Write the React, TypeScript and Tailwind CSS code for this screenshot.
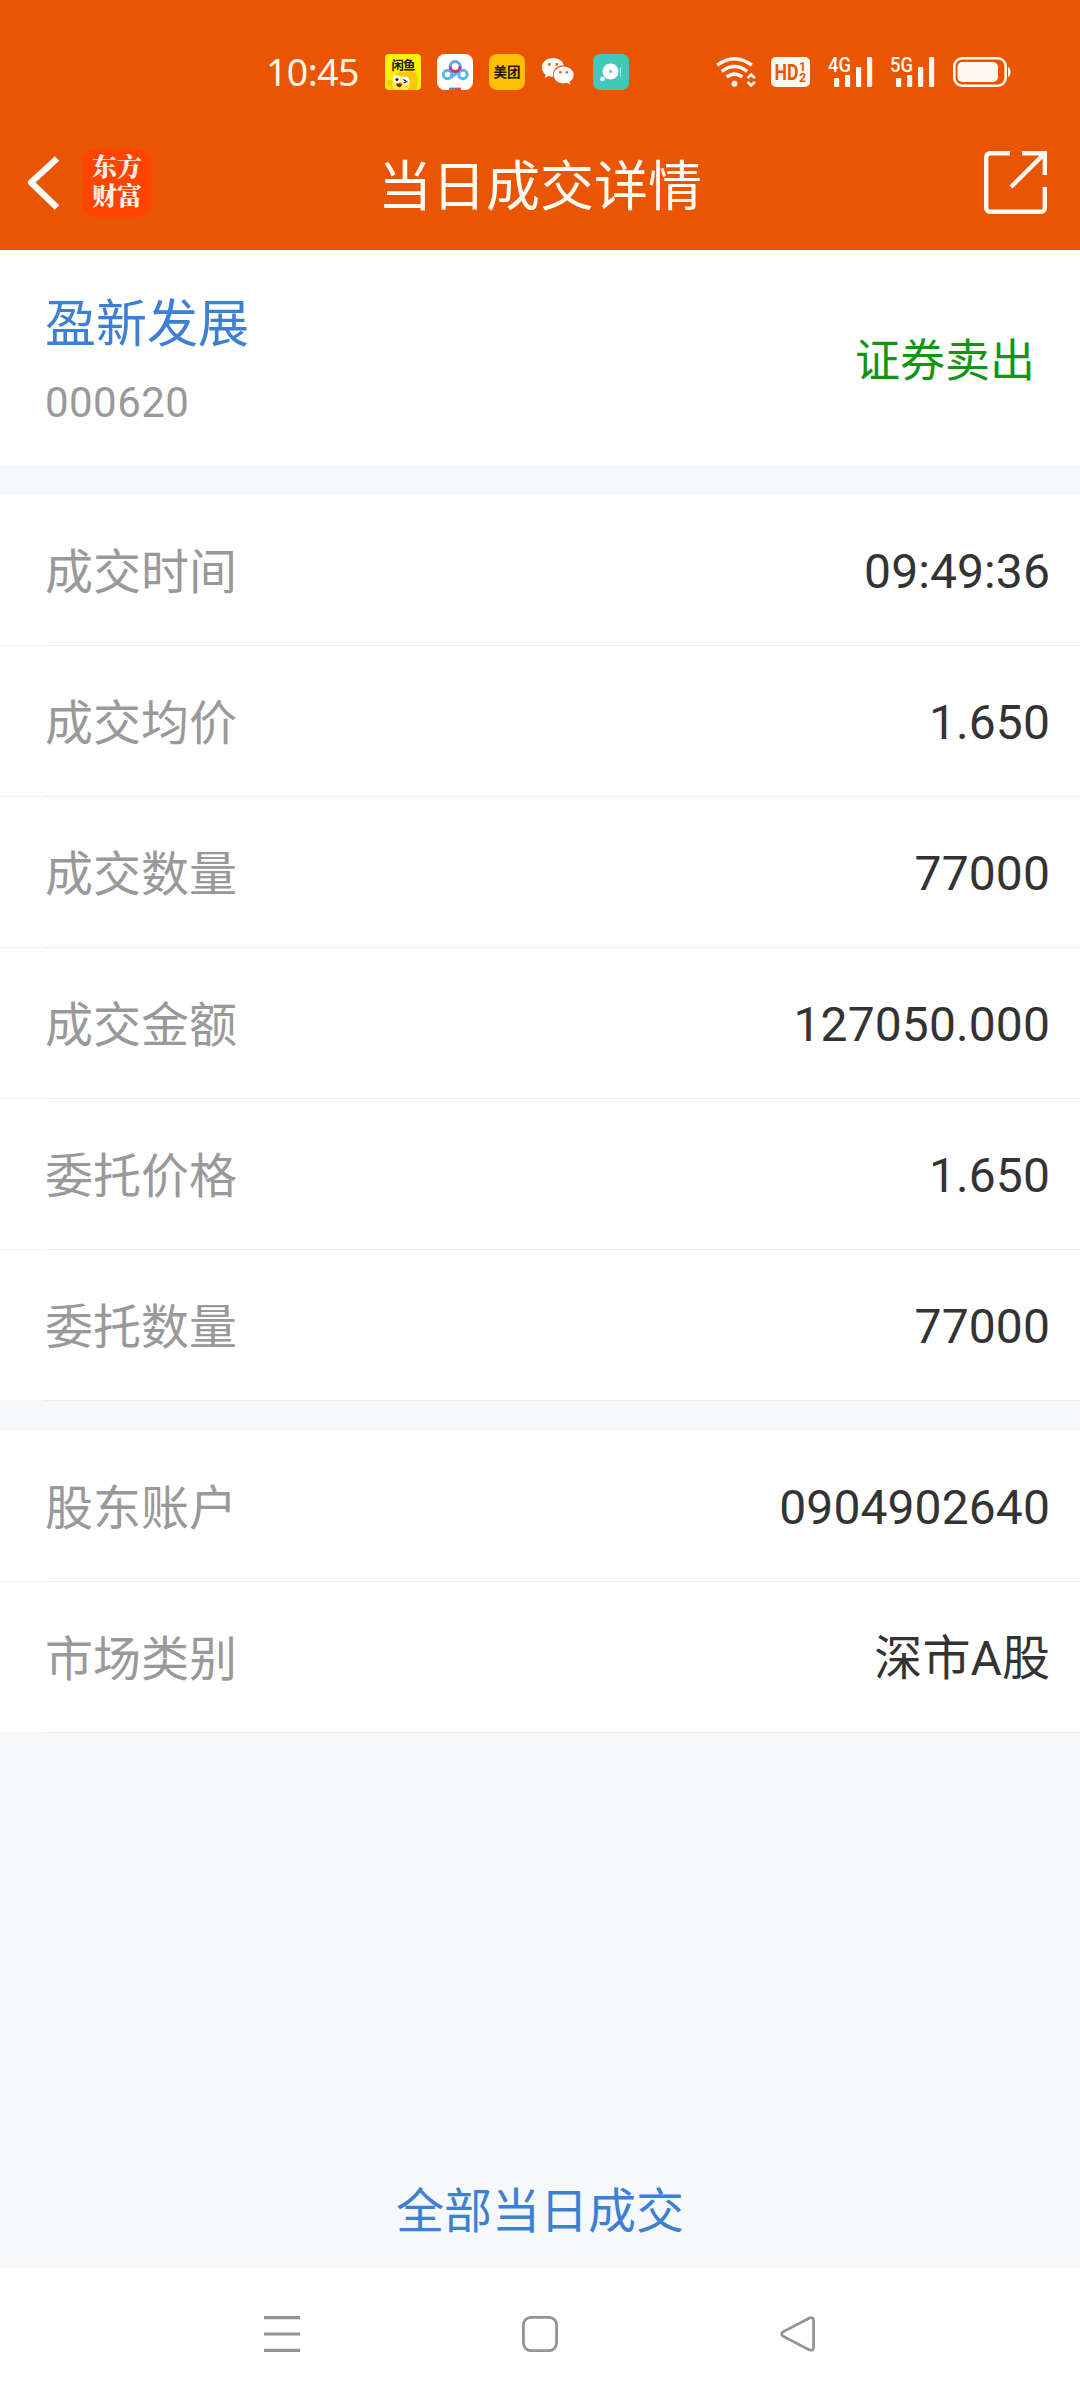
type Row = { label: string; value: string };

const tradeRows: Row[] = [
  { label: "成交时间", value: "09:49:36" },
  { label: "成交均价", value: "1.650" },
  { label: "成交数量", value: "77000" },
  { label: "成交金额", value: "127050.000" },
  { label: "委托价格", value: "1.650" },
  { label: "委托数量", value: "77000" },
];

const accountRows: Row[] = [
  { label: "股东账户", value: "0904902640" },
  { label: "市场类别", value: "深市A股" },
];

function XianyuIcon() {
  return (
    <svg width="36" height="36" viewBox="0 0 36 36">
      <defs>
        <clipPath id="xianyu">
          <rect width="36" height="36" rx="4" />
        </clipPath>
      </defs>
      <g clipPath="url(#xianyu)">
        <rect width="36" height="36" fill="#fcf303" />
        <path d="M3 31c-1-3 0-6 2-5l2 1c1-6 6-9 12-9 3-3 10-3 13 3 2 5 1 11-1 15H7z" fill="#fbc60c" />
        <ellipse cx="16" cy="30" rx="9" ry="8" fill="#fdee3a" />
        <circle cx="11.500" cy="25" r="3.800" fill="#fff" />
        <circle cx="20" cy="26.500" r="4.300" fill="#fff" />
        <circle cx="12" cy="25.500" r="1.600" fill="#222" />
        <path d="M18 25.500l3 1.500M18.500 29l4-1.800" stroke="#222" strokeWidth="1.200" />
        <path d="M11 29.500h6c0 5-5 5-6 0z" fill="#8a1a10" />
        <text x="6.500" y="15.500" fontSize="12.500" fontWeight="700" textLength="24" fill="#1c1c00" fontFamily="Noto Sans CJK SC, sans-serif">
          闲鱼
        </text>
      </g>
    </svg>
  );
}

function NetdiskIcon() {
  return (
    <svg width="36" height="36" viewBox="0 0 36 36" fill="none">
      <rect width="36" height="36" rx="8" fill="#fff" />
      <circle cx="10.500" cy="20.500" r="4.200" stroke="#58b4ea" strokeWidth="3" />
      <circle cx="26" cy="20.500" r="4.200" stroke="#58b4ea" strokeWidth="3" />
      <path d="M14 23.500L22 17" stroke="#58b4ea" strokeWidth="3" />
      <circle cx="18.200" cy="12.500" r="5" stroke="#5fa6e6" strokeWidth="3" />
      <path d="M13.200 12.500a5 5 0 0 0 10 0" stroke="#d4347c" strokeWidth="3" />
      <path d="M12 34.800h6" stroke="#3a8ee6" strokeWidth="2.400" />
      <path d="M18 34.800h6" stroke="#e8405a" strokeWidth="2.400" />
    </svg>
  );
}

function MeituanIcon() {
  return (
    <svg width="36" height="36" viewBox="0 0 36 36">
      <rect width="36" height="36" rx="8" fill="#fdc006" />
      <text x="4.500" y="23" fontSize="13.500" fontWeight="700" textLength="27" fill="#1f1a00" fontFamily="Noto Sans CJK SC, sans-serif">
        美团
      </text>
    </svg>
  );
}

function WechatIcon() {
  return (
    <svg width="36" height="30" viewBox="0 0 36 30" fill="#fff">
      <path d="M12 1C5.500 1 .8 5.200.8 10.500c0 3 1.600 5.400 4 7.100L3.700 21l3.900-2c1.300.4 2.900.7 4.800.7-1.800-5.900 3-11.400 10.400-11.400C21.800 3.900 17.400 1 12 1z" />
      <path d="M22.600 9.600c-5.500 0-9.800 3.700-9.800 8.300 0 4.700 4.300 8.300 9.800 8.300 1.200 0 2.400-.2 3.400-.5l3.300 1.900-.9-2.900c2.500-1.500 4.300-3.900 4.300-6.800 0-4.600-4.600-8.300-10.100-8.300z" />
      <g fill="#ea5504">
        <circle cx="8.300" cy="7.400" r="1.400" />
        <circle cx="15.800" cy="7.400" r="1.400" />
        <circle cx="19.300" cy="15.300" r="1.200" />
        <circle cx="25.900" cy="15.300" r="1.200" />
      </g>
    </svg>
  );
}

function ChatIcon() {
  return (
    <svg width="36" height="36" viewBox="0 0 36 36">
      <rect width="36" height="36" rx="7" fill="#40c9b6" />
      <circle cx="17.500" cy="17.500" r="8" fill="#fff" />
      <circle cx="17.500" cy="17.500" r="1.400" fill="#40c9b6" />
      <circle cx="9.500" cy="25" r="2.300" fill="#fff" />
      <path d="M27.500 14v5.500M27.500 20.800v1.500" stroke="#d5f5ee" strokeWidth="1.100" />
    </svg>
  );
}

function WifiIcon() {
  return (
    <svg width="40" height="30" viewBox="0 0 40 30" fill="none" stroke="#fffaf0" strokeWidth="3.500">
      <path d="M1.200 8.200Q18.500-4.600 35.800 8.200" />
      <path d="M5.800 14.300Q18.500 4.700 31.200 14.300" />
      <path d="M10.700 20Q18.500 14.300 26.300 20" />
      <circle cx="18.500" cy="26.800" r="3" fill="#fffaf0" stroke="none" />
      <path d="M31.500 21.200l3.700-3.700 3.700 3.700M31.500 24.800l3.700 3.700 3.700-3.700" strokeWidth="2.600" />
    </svg>
  );
}

function HdIcon() {
  return (
    <svg width="39" height="30" viewBox="0 0 39 30" fontFamily="Roboto, sans-serif" fontWeight="700" fill="#ea5504">
      <rect width="39" height="30" rx="5" fill="#fffaf0" />
      <text x="3.500" y="23" fontSize="22" textLength="24" lengthAdjust="spacingAndGlyphs">
        HD
      </text>
      <text x="28" y="13.500" fontSize="12.500">
        1
      </text>
      <text x="28" y="25" fontSize="12.500">
        2
      </text>
    </svg>
  );
}

function SignalIcon({ label }: { label: string }) {
  return (
    <svg className="-mt-1.5" width="45" height="36" viewBox="0 -6 45 36" fill="#fffaf0">
      <text x="0" y="14.800" fontSize="20" fontWeight="500" textLength="23" lengthAdjust="spacingAndGlyphs" fontFamily="Roboto, sans-serif">
        {label}
      </text>
      <rect x="6" y="21" width="5.200" height="9" rx="1" />
      <rect x="17" y="18" width="5.200" height="12" rx="1" />
      <rect x="28" y="10" width="5.200" height="20" rx="1" />
      <rect x="39" y="0" width="5.200" height="30" rx="1" />
    </svg>
  );
}

function BatteryIcon() {
  return (
    <svg width="58" height="30" viewBox="0 0 58 30" fill="none">
      <rect x="1.300" y="1.300" width="51.400" height="27.400" rx="8" stroke="#fffaf0" strokeWidth="2.600" />
      <rect x="4.500" y="5" width="40.500" height="20" rx="5" fill="#fffaf0" />
      <path d="M55 10c3.400 1 3.400 9 0 10z" fill="#fffaf0" />
    </svg>
  );
}

function StatusBar() {
  return (
    <div className="flex h-[116px] items-start pt-[54px] pl-[266px]">
      <span className="w-[119px] font-['Noto_Sans',sans-serif] text-[37.5px] leading-[36px] tracking-[-0.6px] text-[#fff6ea]">
        10:45
      </span>
      <div className="flex items-center gap-4">
        <XianyuIcon />
        <NetdiskIcon />
        <MeituanIcon />
        <WechatIcon />
        <ChatIcon />
      </div>
      <div className="mt-[3px] ml-[87px] flex">
        <WifiIcon />
        <div className="ml-[15px] flex">
          <HdIcon />
        </div>
        <div className="mr-[18px] ml-[18px] flex gap-[17px]">
          <SignalIcon label="4G" />
          <SignalIcon label="5G" />
        </div>
        <BatteryIcon />
      </div>
    </div>
  );
}

function TitleBar() {
  return (
    <div className="grid h-[134px] grid-cols-[1fr_auto_1fr] items-start">
      <div className="flex pt-[33px] pl-[26px]">
        <svg className="mt-[6px]" width="34" height="56" viewBox="0 0 34 56" fill="none">
          <path d="M31 3.500L5 27.500l26 25" stroke="#fff" strokeWidth="6.400" strokeLinejoin="round" />
        </svg>
        <div className="ml-[23px] flex h-[68px] w-[68px] flex-col items-center rounded-[14px] bg-[#ff4400] pt-[2px] font-['Noto_Serif_CJK_SC','Noto_Sans_CJK_SC',sans-serif] text-[25px] leading-[29px] font-black text-[#ffece2]">
          <span>东方</span>
          <span>财富</span>
        </div>
      </div>
      <h1 className="pt-[45px] text-[54px] leading-[54px] text-[#fffaf2]">当日成交详情</h1>
      <div className="flex justify-end pt-[35px] pr-[33px]">
        <svg width="63" height="63" viewBox="0 0 63 63" fill="none" stroke="#fffaf2" strokeWidth="4.400">
          <path d="M26 2.200H6a3.800 3.800 0 0 0-3.800 3.800v51a3.800 3.800 0 0 0 3.800 3.800h51a3.800 3.800 0 0 0 3.800-3.800V36" />
          <path d="M38 2.200h22.800V24M60 3L27 36" />
        </svg>
      </div>
    </div>
  );
}

function DetailRow({ label, value }: Row) {
  return (
    <div className="h-[151px]">
      <div className="flex h-[150px] items-center justify-between pr-[30px] pl-[45px] text-[48px]">
        <span className="pt-[5px] text-[#999999]">{label}</span>
        <span className="pt-[4px] tracking-[0.1px] text-[#333333]">{value}</span>
      </div>
      <div className="flex h-px">
        <div className="w-[45px] bg-[#f6f6f7]" />
        <div className="flex-1 bg-[#ebecee]" />
      </div>
    </div>
  );
}

function NavBar() {
  return (
    <nav className="flex h-[132px] justify-center gap-[222px] bg-white pt-12">
      <svg width="36" height="36" viewBox="0 0 36 36" stroke="#949494" strokeWidth="3.200">
        <path d="M0 1.600h36M0 18h36M0 34.400h36" />
      </svg>
      <svg width="36" height="36" viewBox="0 0 36 36" fill="none" stroke="#949494" strokeWidth="2.800">
        <rect x="1.400" y="1.400" width="33.200" height="33.200" rx="7.500" />
      </svg>
      <svg width="36" height="36" viewBox="0 0 36 36" fill="none" stroke="#949494" strokeWidth="2.800">
        <path d="M29.500 1.900L3 15.800Q.4 18 3 20.200L29.500 34Q33.600 35 33.600 31V5Q33.600.8 29.500 1.900z" />
      </svg>
    </nav>
  );
}

function App() {
  return (
    <main className="flex h-[2400px] w-[1080px] flex-col bg-[#f6f8fa] font-[Roboto,'Noto_Sans_CJK_SC',sans-serif]">
      <header className="h-[250px] bg-[#ea5504]">
        <StatusBar />
        <TitleBar />
      </header>

      <section className="flex h-[215px] justify-between bg-white pr-[45px] pl-[45px]">
        <div>
          <h2 className="pt-[48px] text-[51px] leading-[54px] text-[#3d7fd3]">盈新发展</h2>
          <p className="pt-[24px] text-[42px] leading-[54px] tracking-[0.45px] text-[#999999]">000620</p>
        </div>
        <span className="pt-[85px] text-[45px] leading-[54px] text-[#149414]">证券卖出</span>
      </section>

      <section className="mt-[30px] bg-white">
        {tradeRows.map((row) => (
          <DetailRow key={row.label} {...row} />
        ))}
      </section>

      <section className="mt-[30px] bg-white">
        {accountRows.map((row) => (
          <DetailRow key={row.label} {...row} />
        ))}
      </section>

      <button className="mt-auto mb-[28px] text-[48px] leading-[56px] text-[#3d7fd3]">全部当日成交</button>
      <NavBar />
    </main>
  );
}

export default App;
